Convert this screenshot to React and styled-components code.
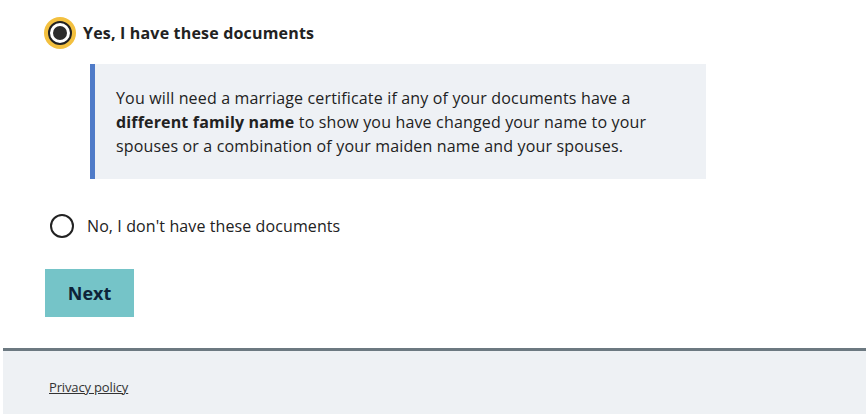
import React, { useState } from 'react'
import styled, { createGlobalStyle } from 'styled-components'

const GlobalStyle = createGlobalStyle`
  html, body {
    margin: 0;
    padding: 0;
    background: #ffffff;
    font-family: "Open Sans", "Liberation Sans", Arial, sans-serif;
    color: #222222;
  }
`

const Main = styled.main`
  display: flex;
  flex-direction: column;
  align-items: flex-start;
  padding: 17px 0 0 45px;
`

const RadioRow = styled.label`
  display: flex;
  align-items: center;
  gap: ${p => (p.$checked ? 11 : 13)}px;
  min-height: 32px;
  margin-top: ${p => p.$offset || 0}px;
  padding-left: ${p => (p.$checked ? 3 : 5)}px;
  cursor: pointer;
`

const RadioCircle = styled.span`
  box-sizing: border-box;
  width: 24px;
  height: 24px;
  border-radius: 50%;
  border: 2px solid #222222;
  background: #ffffff;
  display: flex;
  align-items: center;
  justify-content: center;
  box-shadow: ${p => (p.$focused ? '0 0 0 4px #f3c03f' : 'none')};

  &::after {
    content: '';
    width: 14px;
    height: 14px;
    border-radius: 50%;
    background: #2b2b2b;
    display: ${p => (p.$checked ? 'block' : 'none')};
  }
`

const RadioText = styled.span`
  font-size: 16px;
  line-height: 24px;
  letter-spacing: ${p => (p.$bold ? 0.18 : 0.1)}px;
  font-weight: ${p => (p.$bold ? 700 : 400)};
  color: #222222;
`

const Callout = styled.div`
  box-sizing: border-box;
  width: 616px;
  margin: 15px 0 0 45px;
  padding: 22px 24px 21px 21px;
  background: #eef1f5;
  border-left: 5px solid #4f7bc8;
  font-size: 16px;
  line-height: 24px;
  letter-spacing: 0.16px;
  color: #222222;

  strong {
    font-weight: 700;
  }
`

const NextButton = styled.button`
  margin-top: 27px;
  width: 89px;
  height: 48px;
  border: none;
  background: #75c4c8;
  color: #0d2339;
  font-family: inherit;
  font-size: 18px;
  font-weight: 700;
  cursor: pointer;
`

const Footer = styled.footer`
  box-sizing: border-box;
  margin: 31px 0 0 3px;
  height: 66px;
  border-top: 3px solid #6c7981;
  background: #eef1f4;
  padding: 24px 0 0 46px;
`

const FooterLink = styled.a`
  font-size: 13px;
  line-height: 18px;
  letter-spacing: -0.15px;
  color: #333333;
  text-decoration: underline;
`

function Radio({ checked, focused, label, bold, offset, onSelect }) {
  return (
    <RadioRow $offset={offset} $checked={checked} onClick={onSelect}>
      <RadioCircle $checked={checked} $focused={focused} />
      <RadioText $bold={bold}>{label}</RadioText>
    </RadioRow>
  )
}

export default function App() {
  const [choice, setChoice] = useState('yes')

  return (
    <>
      <GlobalStyle />
      <Main>
        <Radio
          checked={choice === 'yes'}
          focused={choice === 'yes'}
          bold={choice === 'yes'}
          label="Yes, I have these documents"
          onSelect={() => setChoice('yes')}
        />
        <Callout>
          You will need a marriage certificate if any of your documents have a{' '}
          <strong>different family name</strong> to show you have changed your name to your
          spouses or a combination of your maiden name and your spouses.
        </Callout>
        <Radio
          offset={31}
          checked={choice === 'no'}
          focused={choice === 'no'}
          bold={choice === 'no'}
          label="No, I don't have these documents"
          onSelect={() => setChoice('no')}
        />
        <NextButton type="button">Next</NextButton>
      </Main>
      <Footer>
        <FooterLink href="#">Privacy policy</FooterLink>
      </Footer>
    </>
  )
}
